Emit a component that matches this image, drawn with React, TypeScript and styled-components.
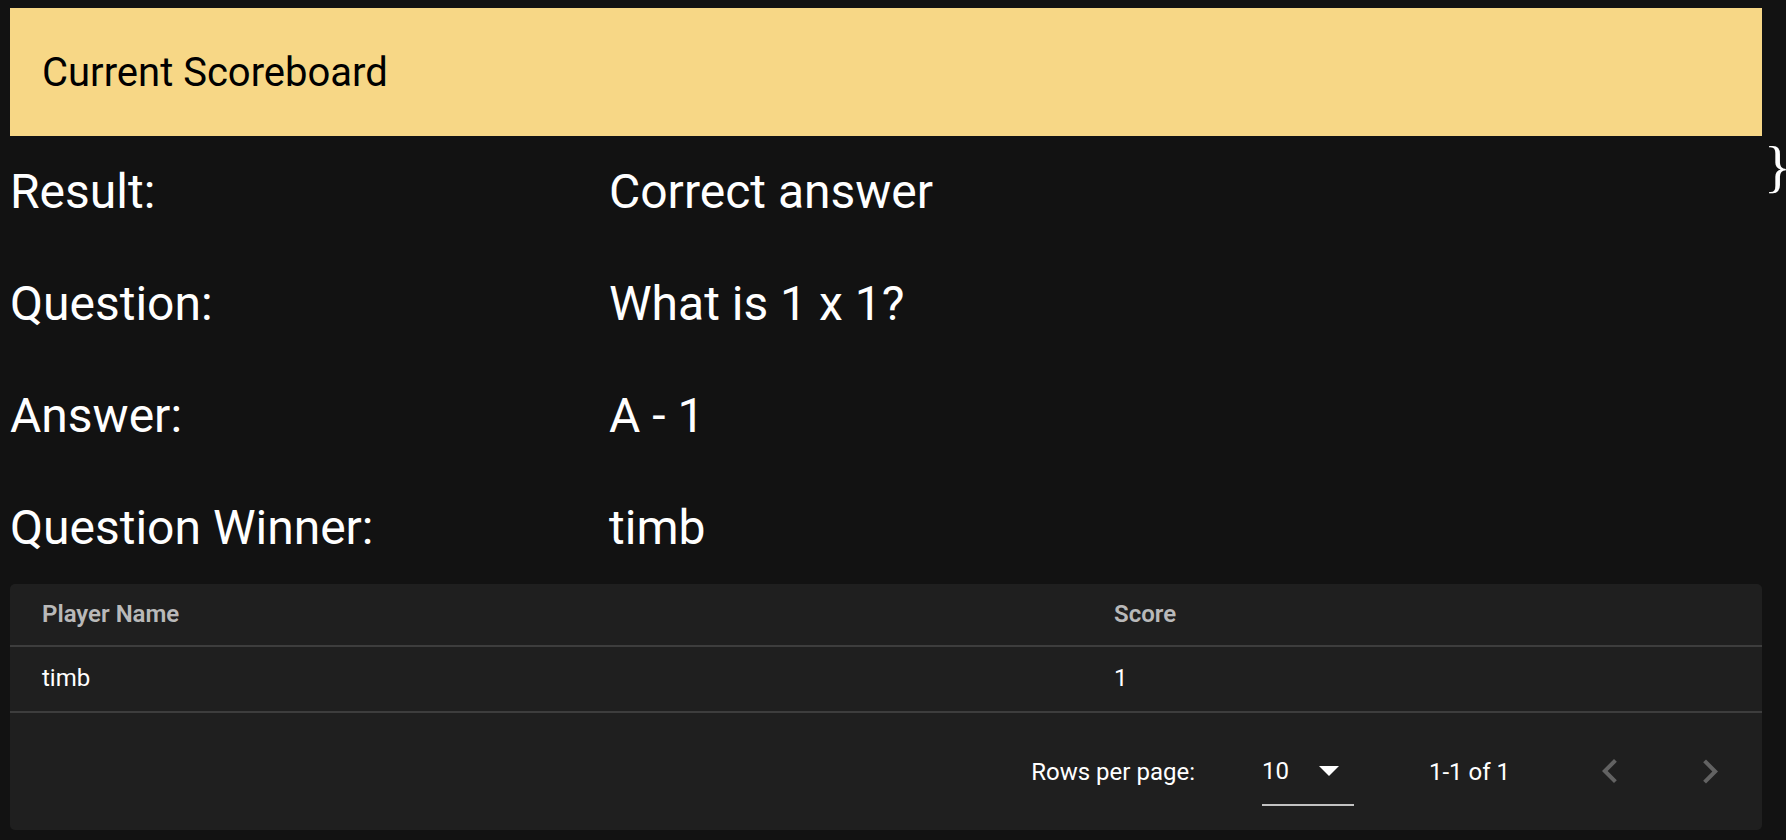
import React from "react";
import styled, { createGlobalStyle } from "styled-components";

const GlobalStyle = createGlobalStyle`
  html, body {
    margin: 0;
    padding: 0;
    background: #121212;
  }
  body {
    font-family: Roboto, "Noto Sans", "Liberation Sans", sans-serif;
    color: #ffffff;
  }
  * { box-sizing: border-box; }
`;

const Page = styled.div`
  display: flex;
  align-items: flex-start;
  padding: 8px 0 0 10px;
  min-height: 840px;
  width: 1786px;
  overflow: hidden;
`;

const Main = styled.main`
  flex: none;
  width: 1752px;
  display: flex;
  flex-direction: column;
`;

const Brace = styled.span`
  flex: none;
  margin-left: 2px;
  margin-top: 131px;
  font-family: "Liberation Serif", "DejaVu Serif", serif;
  font-size: 56px;
  line-height: 56px;
  letter-spacing: -7px;
  color: #ffffff;
`;

const Banner = styled.header`
  height: 128px;
  display: flex;
  align-items: center;
  padding-left: 32px;
  background: #f7d786;
  color: #000000;
  font-size: 40px;
  font-weight: 400;
`;

const InfoGrid = styled.section`
  display: grid;
  grid-template-columns: 599px 1fr;
  row-gap: 56px;
  padding: 28px 0;
`;

const InfoText = styled.div`
  font-size: 48px;
  line-height: 56px;
  font-weight: 400;
  color: #ffffff;
  white-space: nowrap;
`;

const Card = styled.div`
  background: #1f1f1f;
  border-radius: 5px;
  overflow: hidden;
`;

const Table = styled.table`
  width: 100%;
  border-collapse: collapse;
  table-layout: fixed;
`;

const HeadCell = styled.th<{ $width?: number }>`
  width: ${(p) => (p.$width ? `${p.$width}px` : "auto")};
  height: 62px;
  padding: 0 32px 2px;
  text-align: left;
  vertical-align: middle;
  font-size: 24px;
  line-height: 28px;
  font-weight: 600;
  color: rgba(255, 255, 255, 0.7);
  border-bottom: 2px solid #3d3d3d;
`;

const BodyCell = styled.td`
  height: 66px;
  padding: 0 32px 2px;
  text-align: left;
  vertical-align: middle;
  font-size: 24px;
  line-height: 28px;
  font-weight: 400;
  color: #ffffff;
  border-bottom: 2px solid #3d3d3d;
`;

const Toolbar = styled.div`
  height: 117px;
  display: flex;
  align-items: center;
  justify-content: flex-end;
  padding-right: 28px;
  font-size: 24px;
  line-height: 28px;
  color: #ffffff;
`;

const ToolbarLabel = styled.span`
  margin-right: 67px;
`;

const SelectBox = styled.div`
  width: 92px;
  height: 68px;
  display: flex;
  align-items: center;
  justify-content: space-between;
  padding-right: 15px;
  border-bottom: 2px solid #c2c2c2;
  margin-right: 75px;
`;

const SelectValue = styled.span`
  padding-left: 0;
`;

const RangeText = styled.span`
  margin-right: 76px;
`;

const Actions = styled.div`
  display: flex;
  align-items: center;
  gap: 52px;
`;

const NavButton = styled.button`
  width: 48px;
  height: 48px;
  padding: 0;
  border: none;
  background: transparent;
  display: flex;
  align-items: center;
  justify-content: center;
  color: rgba(255, 255, 255, 0.3);
  cursor: default;
`;

const rows: [string, string][] = [
  ["Result:", "Correct answer"],
  ["Question:", "What is 1 x 1?"],
  ["Answer:", "A - 1"],
  ["Question Winner:", "timb"],
];

const ChevronLeft = () => (
  <svg width="48" height="48" viewBox="0 0 24 24" fill="currentColor">
    <path d="M15.41 16.09l-4.58-4.59 4.58-4.59L14 5.5l-6 6 6 6z" />
  </svg>
);

const ChevronRight = () => (
  <svg width="48" height="48" viewBox="0 0 24 24" fill="currentColor">
    <path d="M8.59 16.34l4.58-4.59-4.58-4.59L10 5.75l6 6-6 6z" />
  </svg>
);

const DropArrow = () => (
  <svg width="20" height="10" viewBox="0 0 20 10" fill="#ffffff">
    <path d="M0 0h20L10 10z" />
  </svg>
);

export default function App() {
  return (
    <>
      <GlobalStyle />
      <Page>
        <Main>
          <Banner>Current Scoreboard</Banner>
          <InfoGrid>
            {rows.map(([label, value]) => (
              <React.Fragment key={label}>
                <InfoText>{label}</InfoText>
                <InfoText>{value}</InfoText>
              </React.Fragment>
            ))}
          </InfoGrid>
          <Card>
            <Table>
              <thead>
                <tr>
                  <HeadCell $width={1072}>Player Name</HeadCell>
                  <HeadCell>Score</HeadCell>
                </tr>
              </thead>
              <tbody>
                <tr>
                  <BodyCell>timb</BodyCell>
                  <BodyCell>1</BodyCell>
                </tr>
              </tbody>
            </Table>
            <Toolbar>
              <ToolbarLabel>Rows per page:</ToolbarLabel>
              <SelectBox>
                <SelectValue>10</SelectValue>
                <DropArrow />
              </SelectBox>
              <RangeText>1-1 of 1</RangeText>
              <Actions>
                <NavButton aria-label="previous page" disabled>
                  <ChevronLeft />
                </NavButton>
                <NavButton aria-label="next page" disabled>
                  <ChevronRight />
                </NavButton>
              </Actions>
            </Toolbar>
          </Card>
        </Main>
        <Brace>{"}"}</Brace>
      </Page>
    </>
  );
}
